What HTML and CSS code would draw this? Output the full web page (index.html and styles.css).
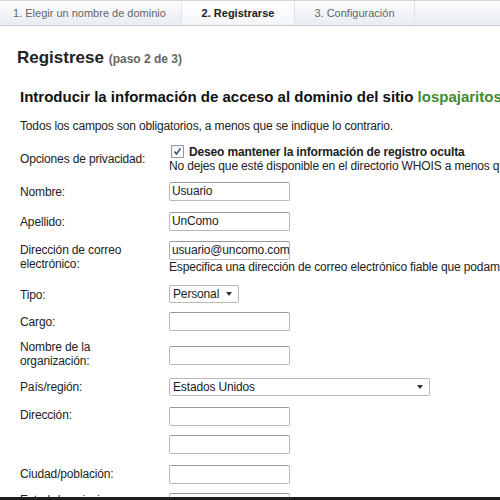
FILE: index.html
```html
<!DOCTYPE html>
<html lang="es">
<head>
<meta charset="utf-8">
<link rel="stylesheet" href="styles.css">
</head>
<body>
<div class="tabs">
  <div class="tab tab1">1. Elegir un nombre de dominio</div>
  <div class="tab tab2 active">2. Registrarse</div>
  <div class="tab tab3">3. Configuración</div>
  <div class="tab rest"></div>
</div>
<div class="page">
  <h1 class="title">Registrese <span class="step">(paso 2 de 3)</span></h1>
  <h2 class="subtitle">Introducir la información de acceso al dominio del sitio <span class="site">lospajaritos.com</span></h2>
  <p class="note">Todos los campos son obligatorios, a menos que se indique lo contrario.</p>
  <div class="form">
    <div class="row r-priv">
      <div class="label">Opciones de privacidad:</div>
      <div class="field">
        <label class="check"><span class="box"><svg width="11" height="11" viewBox="0 0 11 11"><path d="M2.5 5.5 L4.5 8 L8.5 2.5" fill="none" stroke="#3a4a6a" stroke-width="1.4"/></svg></span><b>Deseo mantener la información de registro oculta</b></label>
        <div class="help">No dejes que esté disponible en el directorio WHOIS a menos que lo autorices.</div>
      </div>
    </div>
    <div class="row r-nombre">
      <div class="label">Nombre:</div>
      <div class="field"><div class="input">Usuario</div></div>
    </div>
    <div class="row r-apellido">
      <div class="label">Apellido:</div>
      <div class="field"><div class="input">UnComo</div></div>
    </div>
    <div class="row r-email">
      <div class="label">Dirección de correo<br>electrónico:</div>
      <div class="field"><div class="input">usuario@uncomo.com</div><div class="help">Especifica una dirección de correo electrónico fiable que podamos utilizar.</div></div>
    </div>
    <div class="row r-tipo">
      <div class="label">Tipo:</div>
      <div class="field"><div class="select small">Personal <span class="arrow"></span></div></div>
    </div>
    <div class="row r-cargo">
      <div class="label">Cargo:</div>
      <div class="field"><div class="input"></div></div>
    </div>
    <div class="row r-org">
      <div class="label">Nombre de la<br>organización:</div>
      <div class="field"><div class="input"></div></div>
    </div>
    <div class="row r-pais">
      <div class="label">País/región:</div>
      <div class="field"><div class="select wide">Estados Unidos <span class="arrow"></span></div></div>
    </div>
    <div class="row r-dir">
      <div class="label">Dirección:</div>
      <div class="field"><div class="input"></div><div class="input second"></div></div>
    </div>
    <div class="row r-ciudad">
      <div class="label">Ciudad/población:</div>
      <div class="field"><div class="input"></div></div>
    </div>
    <div class="row r-estado">
      <div class="label">Estado/provincia:</div>
      <div class="field"><div class="input"></div></div>
    </div>
  </div>
</div>
<div class="bottombar"></div>
</body>
</html>
```
FILE: styles.css
```css
html, body {
  margin: 0;
  padding: 0;
  width: 500px;
  height: 500px;
  overflow: hidden;
  background: #fff;
  font-family: "Liberation Sans", Arial, sans-serif;
  color: #222;
}
.tabs {
  display: flex;
  border-top: 1px solid #d4d8dc;
  border-bottom: 1px solid #c4c9cf;
  background: linear-gradient(#fbfcfd, #e9edf1);
  box-sizing: border-box;
  height: 26px;
}
.tab {
  font-size: 11px;
  color: #666;
  line-height: 24px;
  text-align: center;
  border-right: 1px solid #e0e4e8;
  white-space: nowrap;
  box-sizing: border-box;
}
.tab1 { width: 182px; text-align: left; padding-left: 13px; }
.tab2 { width: 113px; }
.tab3 { width: 120px; }
.rest { flex: 1; border-right: none; }
.tab.active {
  font-weight: bold;
  color: #222;
  background: linear-gradient(#ffffff, #f3f5f7);
}
.page {
  padding-left: 20px;
  white-space: nowrap;
}
.title {
  margin: 22px 0 0 -3px;
  font-size: 17px;
  font-weight: bold;
  color: #222;
  line-height: 20px;
}
.step {
  font-size: 12px;
  color: #666;
}
.subtitle {
  margin: 19px 0 0 0;
  font-size: 15px;
  font-weight: bold;
  line-height: 18px;
  color: #111;
}
.site { color: #3d8b2e; }
.note {
  margin: 13px 0 0 0;
  font-size: 12px;
  line-height: 14px;
  color: #222;
  letter-spacing: -0.15px;
}
.form {
  margin-top: 10px;
  font-size: 12px;
  color: #222;
  letter-spacing: -0.15px;
}
.row {
  display: flex;
  line-height: 14px;
}
.label {
  width: 149px;
  flex: none;
}
.field { flex: none; }
.r-priv { padding-top: 1px; height: 36px; }
.r-priv .label { padding-top: 8px; }
.check { display: flex; align-items: center; gap: 5px; padding-left: 2px; height: 15px; }
.check b { font-weight: bold; }
.box {
  display: inline-block;
  width: 11px;
  height: 11px;
  border: 1px solid #8e9aab;
  background: linear-gradient(#f0f3f7, #ffffff);
}
.box svg { display: block; }
.help { line-height: 14px; }
.input {
  width: 121px;
  height: 19px;
  border: 1px solid #b8b8b8;
  border-top-color: #9a9a9a;
  box-sizing: border-box;
  padding: 1px 2px;
  line-height: 15px;
  font-size: 12px;
  border-radius: 2px;
  overflow: hidden;
}
.r-nombre { margin-top: 2px; height: 30px; }
.r-nombre .label, .r-apellido .label { padding-top: 3px; }
.r-apellido { height: 29px; }
.r-email { height: 44px; }
.r-email .label { padding-top: 2px; }
.select {
  position: relative;
  height: 18px;
  border: 1px solid #b8b8b8;
  box-sizing: border-box;
  line-height: 16px;
  padding-left: 3px;
  border-radius: 2px;
  background: #fff;
}
.select.small { width: 70px; }
.select.wide { width: 261px; }
.arrow {
  position: absolute;
  right: 6px;
  top: 6px;
  width: 0;
  height: 0;
  border-left: 3px solid transparent;
  border-right: 3px solid transparent;
  border-top: 4px solid #333;
}
.r-tipo { height: 27px; }
.r-tipo .label { padding-top: 3px; }
.r-cargo { height: 34px; }
.r-cargo .label { padding-top: 3px; }
.r-org { height: 32px; }
.r-org .label { margin-top: -6px; }
.r-pais { height: 29px; }
.r-pais .label { padding-top: 2px; }
.r-dir { height: 58px; }
.r-dir .label { padding-top: 1px; }
.input.second { margin-top: 9px; }
.r-ciudad { height: 28px; }
.r-ciudad .label { padding-top: 2px; }
.bottombar {
  position: fixed;
  left: 0;
  right: 0;
  bottom: 0;
  height: 3px;
  background: #1e1e1e;
}
```
